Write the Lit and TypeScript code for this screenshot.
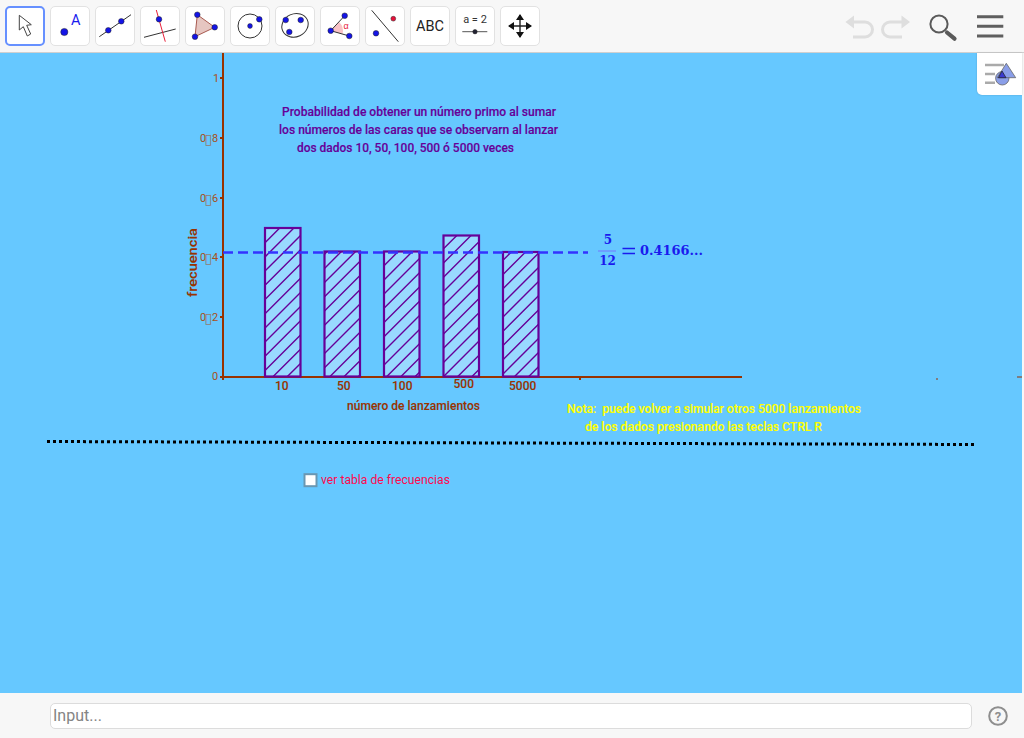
import { LitElement, html, css, svg } from "lit";
import { customElement } from "lit/decorators.js";

const dot = (x: number, y: number, r = 2.8, c = "#1414e6") =>
  svg`<circle cx=${x} cy=${y} r=${r} fill=${c} stroke="#222" stroke-width="0.5"/>`;

const tools = [
  svg`<path d="M14.3 9.3V24l4-3.3 4 9.3 3.4-2-4-8.7 4.6-.6z" fill="#fff" stroke="#444" stroke-width="1"/>`,
  svg`${dot(14.3, 26, 3.6)}<text x="25.7" y="19" class="ta">A</text>`,
  svg`<path d="M4.3 30.7 36 8.7" class="ln"/>${dot(13.3, 24.3)}${dot(26.3, 15.3)}`,
  svg`<path d="M4 31.3 35.7 23" class="ln"/><path d="M16.3 4 25.3 35.7" stroke="#e8203a" stroke-width="1"/>${dot(19, 13.3)}`,
  svg`<path d="M12.3 8.7 29.7 21.3 10 30.7z" fill="#e6c6c1" stroke="#a85a50" stroke-width="1"/>${dot(12.3, 8.7)}${dot(29.7, 21.3)}${dot(10, 30.7)}`,
  svg`<circle cx="20" cy="20" r="12" fill="none" stroke="#333" stroke-width="1"/>${dot(20, 20, 2.4)}${dot(29.3, 13.3)}`,
  svg`<ellipse cx="20" cy="19.3" rx="13.5" ry="11.5" transform="rotate(-25 20 19.3)" fill="none" stroke="#333" stroke-width="1"/>${dot(10.7, 14)}${dot(25.7, 14)}${dot(14.3, 26)}`,
  svg`<path d="M10.7 24.7 19 16A12 12 0 0 1 22.5 28z" fill="#f9c2c6"/><path d="M24.7 9.7 10.7 24.7 29.3 30" fill="none" stroke="#333" stroke-width="1"/>${dot(10.7, 24.7)}${dot(24.7, 9.7)}${dot(29.3, 30)}<text x="23.5" y="23" class="al">α</text>`,
  svg`<path d="M6.7 4.3 33.3 35.7" class="ln"/>${dot(11, 27.3)}${dot(28.3, 12.7, 2.4, "#e8103a")}`,
  svg`<text x="20" y="25.3" text-anchor="middle" class="abc">ABC</text>`,
  svg`<text x="20" y="16.5" text-anchor="middle" class="a2">a = 2</text><path d="M7.3 25.7H32.3" stroke="#555" stroke-width="1"/>${dot(20, 25.7, 2.2, "#223")}`,
  svg`<path d="M20 9V31M9 20H31" stroke="#222" stroke-width="1.4"/><path d="M20 8 24 14H16zM20 32 24 26H16zM8 20 14 16V24zM32 20 26 16V24z" fill="#111"/>`,
];

const bars: [number, number][] = [
  [265, 228], [324.5, 251.5], [384, 251.5], [443.5, 235.5], [503, 252],
];
const yLabels: [string, number][] = [["8", 142], ["6", 202], ["4", 261], ["2", 321]];

const BW = 35.5;
const BOTTOM = 376.5;
/** Diagonal hatch of one bar: lines x + y = c, clipped to the bar by calculation. */
function hatch(x0: number, y0: number): string {
  const x1 = x0 + BW;
  let d = "";
  const period = 14.2;
  let c = 507.7 + Math.ceil((x0 + y0 - 507.7) / period) * period;
  for (; c < x1 + BOTTOM; c += period) {
    const ax = Math.max(x0, c - BOTTOM);
    const bx = Math.min(x1, c - y0);
    d += `M${ax.toFixed(1)} ${(c - ax).toFixed(1)}L${bx.toFixed(1)} ${(c - bx).toFixed(1)}`;
  }
  return d;
}

@customElement("app-root")
export class AppRoot extends LitElement {
  static styles = css`
    :host { display: flex; flex-direction: column; width: 1024px; height: 738px; background: #f7f7f7; font-family: Roboto, "Liberation Sans", sans-serif; overflow: hidden; }
    .bar { height: 53px; box-sizing: border-box; border-bottom: 1px solid #d0d0d0; display: flex; align-items: flex-start; padding: 6px 0 0 5px; gap: 5px; background: #f7f7f7; flex: none; }
    .tool { width: 40px; height: 40px; box-sizing: border-box; background: #fff; border: 1px solid #e2e2e2; border-radius: 5px; flex: none; position: relative; }
    .tool.on { border: 2px solid #6690ff; }
    .tool svg { position: absolute; left: -1px; top: -1px; width: 40px; height: 40px; }
    .tool.on svg { left: -2px; top: -2px; }
    .ln { stroke: #333; stroke-width: 1; fill: none; }
    .ta { font: 14.5px Roboto, sans-serif; fill: #1a1aee; text-anchor: middle; }
    .al { font: 9px "Liberation Sans", sans-serif; fill: #e8203a; }
    .abc { font: 14.5px Roboto, sans-serif; fill: #222; }
    .a2 { font: 11px Roboto, sans-serif; fill: #333; }
    .right { margin-left: auto; width: 180px; height: 46px; margin-top: -6px; flex: none; }
    .canvas { flex: 1; position: relative; margin-right: 2px; background: #66c8ff; }
    .canvas > svg { position: absolute; left: 0; top: -53px; width: 1024px; height: 738px; }
    .t { font-family: Roboto, sans-serif; font-size: 12px; white-space: pre; }
    .title { fill: #660099; font-weight: 500; stroke: #660099; stroke-width: 0.15; }
    .note { fill: #ffff00; font-weight: 500; stroke: #ffff00; stroke-width: 0.15; }
    .axis { fill: #993300; font-weight: 500; stroke: #993300; stroke-width: 0.1; }
    .ylab { fill: #a85020; font-size: 11px; }
    .tofu { font-family: "DejaVu Sans", sans-serif; font-size: 14px; fill: #8f7a70; }
    .chk { fill: #ff0a4f; }
    .math { font-family: "DejaVu Serif", serif; font-weight: 700; fill: #1a1aee; }
    .style { position: absolute; right: 0; top: 0; width: 45px; height: 42px; background: #fff; border-bottom-left-radius: 5px; box-shadow: 0 0 2px rgba(0,0,0,.2); }
    .style svg { display: block; width: 45px; height: 42px; }
    .foot { height: 45px; flex: none; display: flex; align-items: center; padding: 0 15px 0 50px; gap: 15px; background: #f7f7f7; box-sizing: border-box; }
    .input { flex: 1; height: 26px; box-sizing: border-box; background: #fff; border: 1px solid #dcdcdc; border-radius: 5px; color: #848484; font-size: 16px; line-height: 24px; padding-left: 2px; }
    .help { width: 22px; height: 22px; flex: none; display: block; }
  `;

  render() {
    return html`
      <div class="bar">
        ${tools.map((t, i) => html`<div class="tool ${i === 0 ? "on" : ""}"><svg viewBox="0 0 40 40">${t}</svg></div>`)}
        <svg class="right" viewBox="844 0 180 46">
          <g fill="none" stroke="#dedede" stroke-width="3">
            <path d="M851 22H865A7.5 7.5 0 0 1 865 37H853"/>
            <path d="M904 22H890A7.5 7.5 0 0 0 890 37H902"/>
          </g>
          <path d="M845.5 22 854 15.5V28.5zM910 22 901.5 15.5V28.5z" fill="#dedede"/>
          <circle cx="939" cy="24" r="8.6" fill="none" stroke="#5a5a5a" stroke-width="2"/>
          <path d="M947 32.5 954.5 38.7" stroke="#5a5a5a" stroke-width="4.2" stroke-linecap="round"/>
          <path d="M977 16.7H1003.3M977 26.3H1003.3M977 36H1003.3" stroke="#5f5f5f" stroke-width="3"/>
        </svg>
      </div>
      <div class="canvas">
        <svg viewBox="0 0 1024 738">
          <path d="M223 53V380" stroke="#993300" stroke-width="2"/>
          <path d="M222 377H742" stroke="#993300" stroke-width="2"/>
          <path d="M220 78H223M220 138H223M220 198H223M220 257H223M220 317H223M220 377H223M580 377V380" stroke="#993300" stroke-width="2"/>
          <path d="M936 379H938M1017 377H1022" stroke="#993300" stroke-width="1.2"/>
          ${bars.map(([x, y]) => svg`
            <rect x=${x} y=${y} width=${BW} height=${BOTTOM - y} fill="#99d9ff"/>
            <path d=${hatch(x, y)} stroke="#660099" stroke-width="1.4" fill="none"/>
            <rect x=${x} y=${y} width=${BW} height=${BOTTOM - y} fill="none" stroke="#660099" stroke-width="2.2"/>`)}
          <path d="M223 252.5H588" stroke="#3333ff" stroke-width="2.5" stroke-dasharray="10 5"/>
          <text class="math" x="608" y="244" text-anchor="middle" font-size="12">5</text>
          <path d="M598 251H616" stroke="#6f8fff" stroke-width="1.4"/>
          <text class="math" x="607.5" y="265" text-anchor="middle" font-size="12">12</text>
          <path d="M622.5 248.5H635M622.5 253.5H635" stroke="#1a1aee" stroke-width="1.3"/>
          <text class="math" x="640" y="255" font-size="12.5" textLength="63" lengthAdjust="spacingAndGlyphs">0.4166...</text>

          <text class="t title" x="282" y="116" textLength="274" lengthAdjust="spacingAndGlyphs">Probabilidad de obtener un número primo al sumar</text>
          <text class="t title" x="279" y="134" textLength="279" lengthAdjust="spacingAndGlyphs">los números de las caras que se observarn al lanzar</text>
          <text class="t title" x="297" y="152" textLength="217" lengthAdjust="spacingAndGlyphs">dos dados 10, 50, 100, 500 ó 5000 veces</text>

          <text class="t ylab" x="213" y="82">1</text>
          ${yLabels.map(([s, y]) => svg`<text class="t ylab" y=${y}><tspan x="200">0</tspan><tspan class="tofu" x="204.6" y=${y + 1.5}>▯</tspan><tspan x="212" y=${y}>${s}</tspan></text>`)}
          <text class="t ylab" x="212" y="380">0</text>
          <text class="t axis" transform="translate(196.5 297) rotate(-90)" textLength="69" lengthAdjust="spacingAndGlyphs">frecuencia</text>
          <text class="t axis" x="275" y="390">10</text>
          <text class="t axis" x="337" y="390">50</text>
          <text class="t axis" x="392" y="390">100</text>
          <text class="t axis" x="453.5" y="388">500</text>
          <text class="t axis" x="509" y="390">5000</text>
          <text class="t axis" x="347" y="410" textLength="133" lengthAdjust="spacingAndGlyphs">número de lanzamientos</text>

          <text class="t note" x="567" y="413" textLength="294" lengthAdjust="spacingAndGlyphs">Nota:  puede volver a simular otros 5000 lanzamientos</text>
          <text class="t note" x="585" y="431" textLength="237" lengthAdjust="spacingAndGlyphs">de los dados presionando las teclas CTRL R</text>

          <path d="M47 441.5 974 444.5" stroke="#000" stroke-width="3" stroke-dasharray="3 3"/>

          <rect x="304.5" y="474.2" width="12" height="12" fill="#fff" stroke="#6a97b2" stroke-width="2"/>
          <text class="t chk" x="321" y="484" textLength="129" lengthAdjust="spacingAndGlyphs">ver tabla de frecuencias</text>
        </svg>
        <div class="style">
          <svg viewBox="977 53 45 42">
            <path d="M985 65H1004M985 74H995M985 82.7H995" stroke="#aaa" stroke-width="2.4"/>
            <circle cx="1002.3" cy="78.3" r="6.7" fill="#8a9ee8" stroke="#666" stroke-width="0.8"/>
            <path d="M1006.3 63.3 1015.7 77.7H997.3z" fill="#8a9ee8" stroke="#666" stroke-width="0.8"/>
            <path d="M1002 71 1006 77.7H998.5z" fill="#3a3ad0" stroke="#223" stroke-width="0.8"/>
          </svg>
        </div>
      </div>
      <div class="foot">
        <div class="input">Input...</div>
        <svg class="help" viewBox="0 0 22 22">
          <circle cx="11" cy="11" r="8.8" fill="none" stroke="#8e8e8e" stroke-width="2"/>
          <text x="11" y="15.5" text-anchor="middle" font-family="Roboto, sans-serif" font-weight="700" font-size="13" fill="#8e8e8e">?</text>
        </svg>
      </div>
    `;
  }
}
